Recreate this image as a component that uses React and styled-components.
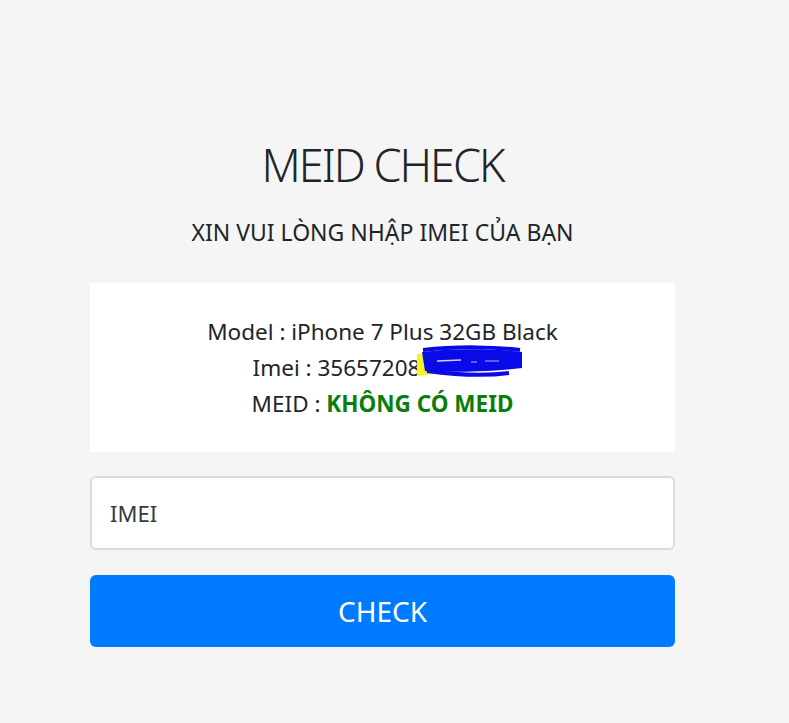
import React from "react";
import styled, { createGlobalStyle } from "styled-components";

const Global = createGlobalStyle`
  html, body { margin: 0; padding: 0; background: #f5f5f5; }
  body { font-family: "Noto Sans", "Open Sans", sans-serif; color: #212529; }
`;

const Page = styled.div`
  min-height: 723px;
  padding: 0 114px 0 90px;
  box-sizing: border-box;
`;

const Column = styled.div`
  width: 585px;
  display: flex;
  flex-direction: column;
  padding-top: 137px;
`;

const Title = styled.h1`
  margin: 0;
  font-size: 45px;
  font-weight: 300;
  letter-spacing: -2px;
  line-height: 56px;
  text-align: center;
  color: #212529;
`;

const Subtitle = styled.p`
  margin: 23px 0 0;
  font-size: 23px;
  line-height: 33px;
  text-align: center;
  color: #212529;
`;

const ResultBox = styled.div`
  margin-top: 34px;
  background: #ffffff;
  padding: 31px 0 30px;
  display: flex;
  flex-direction: column;
  align-items: center;
`;

const Line = styled.div`
  font-size: 22.5px;
  line-height: 36px;
  white-space: nowrap;
`;

const Status = styled.span`
  color: #0a7d0a;
  font-weight: 700;
`;

const Redact = styled.span`
  position: relative;
  display: inline-block;
  width: 92px;
  height: 1em;
`;

const Scribble = styled.svg`
  position: absolute;
  left: -3px;
  top: -8px;
  overflow: visible;
`;

const ImeiInput = styled.input`
  margin-top: 24px;
  height: 74px;
  box-sizing: border-box;
  border: 2px solid #d3dde3;
  border-radius: 6px;
  background: #fff;
  padding: 0 18px;
  font-family: inherit;
  font-size: 22px;
  color: #343a40;
  outline: none;
  &::placeholder { color: #343a40; opacity: 1; }
`;

const CheckButton = styled.button`
  margin-top: 25px;
  height: 72px;
  border: none;
  border-radius: 6px;
  background: #007bff;
  color: #fff;
  font-family: inherit;
  font-size: 28px;
  cursor: pointer;
`;

export default function App() {
  return (
    <Page>
      <Global />
      <Column>
        <Title>MEID CHECK</Title>
        <Subtitle>XIN VUI LÒNG NHẬP IMEI CỦA BẠN</Subtitle>
        <ResultBox>
          <Line>Model : iPhone 7 Plus 32GB Black</Line>
          <Line>
            Imei : 35657208
            <Redact>
              <Scribble width="106" height="32" viewBox="0 0 106 32">
                <path d="M0 8 L17 7 L18 28 L0 30 Z" fill="#f3f32a" />
                <path d="M5 6 C40 2 80 3 105 6 L105 22 C80 25 50 27 8 25 Z" fill="#0a0ae8" />
                <path d="M6 4 C40 0 80 1 103 4" stroke="#0a0ae8" strokeWidth="4" fill="none" />
                <path d="M10 25 C40 29 70 30 92 27" stroke="#0a0ae8" strokeWidth="4" fill="none" />
                <path d="M20 15 L44 14" stroke="#ffffff" strokeWidth="1.5" opacity="0.8" />
                <path d="M54 16 L60 16 M68 15 L82 15" stroke="#ffffff" strokeWidth="1.2" opacity="0.7" />
              </Scribble>
            </Redact>
          </Line>
          <Line>
            MEID : <Status>KHÔNG CÓ MEID</Status>
          </Line>
        </ResultBox>
        <ImeiInput placeholder="IMEI" />
        <CheckButton>CHECK</CheckButton>
      </Column>
    </Page>
  );
}
